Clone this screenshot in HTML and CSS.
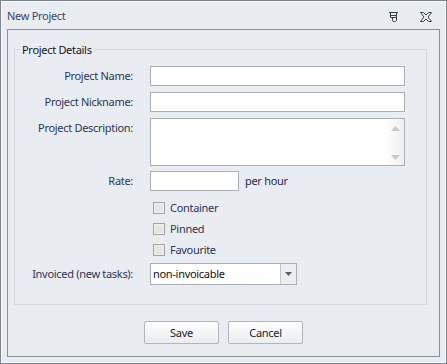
FILE: index.html
```html
<!DOCTYPE html>
<html>
<head>
<meta charset="utf-8">
<title>New Project</title>
<link rel="stylesheet" href="styles.css">
</head>
<body>
<div class="window">
  <div class="titlebar">
    <span class="title">New Project</span>
    <span class="tb-icons">
      <svg class="pin" width="9" height="10" viewBox="0 0 9 10" fill="none" stroke="#3a3f47" stroke-width="1">
        <path d="M0 0.5H9"/>
        <path d="M1.5 0.5V5.5H7.5V0.5"/>
        <path d="M1.5 3.5H7.5"/>
        <path d="M3.5 5.5V8.5Q3.5 9.5 4.5 9.5H6.5L7.5 8.5V5.5"/>
      </svg>
      <svg class="close" width="12" height="10" viewBox="0 0 12 10" fill="none" stroke="#3a3f47" stroke-width="1">
        <path d="M0.5 0.5H3.5L6 3L8.5 0.5H11.5L8 5L11.5 9.5H8.5L6 7L3.5 9.5H0.5L4 5Z"/>
      </svg>
    </span>
  </div>
  <div class="frame">
    <div class="group">
      <span class="legend">Project Details</span>
      <div class="row">
        <span class="lbl">Project Name:</span>
        <div class="field wide"></div>
      </div>
      <div class="row">
        <span class="lbl">Project Nickname:</span>
        <div class="field wide"></div>
      </div>
      <div class="row">
        <span class="lbl">Project Description:</span>
        <div class="field wide desc">
          <div class="vscroll">
            <svg width="9" height="5" viewBox="0 0 9 5"><path d="M0 5L4.5 0L9 5Z" fill="#c9c9c9"/></svg>
            <svg width="9" height="5" viewBox="0 0 9 5"><path d="M0 0L4.5 5L9 0Z" fill="#c9c9c9"/></svg>
          </div>
        </div>
      </div>
      <div class="row row-rate">
        <span class="lbl">Rate:</span>
        <div class="field rate"></div>
        <span class="unit">per hour</span>
      </div>
      <div class="checks">
        <div class="check"><span class="box"></span><span class="ctext">Container</span></div>
        <div class="check"><span class="box"></span><span class="ctext">Pinned</span></div>
        <div class="check"><span class="box"></span><span class="ctext">Favourite</span></div>
      </div>
      <div class="row row-combo">
        <span class="lbl">Invoiced (new tasks):</span>
        <div class="combo">
          <span class="combo-text">non-invoicable</span>
          <span class="combo-btn">
            <svg width="7" height="4" viewBox="0 0 7 4"><path d="M0 0H7L3.5 4Z" fill="#5a5f66"/></svg>
          </span>
        </div>
      </div>
    </div>
    <div class="buttons">
      <button class="btn">Save</button>
      <button class="btn">Cancel</button>
    </div>
  </div>
</div>
</body>
</html>
```
FILE: styles.css
```css
html, body {
  margin: 0;
  padding: 0;
}
body {
  font-family: "Noto Sans", "Open Sans", sans-serif;
  font-size: 11px;
  letter-spacing: -0.3px;
  color: #2d3656;
  background: #e9ecf0;
}
.window {
  width: 447px;
  height: 364px;
  box-sizing: border-box;
  border: 1px solid #7b848f;
  box-shadow: inset 0 0 0 1px #f7f8fa;
  background: #e9ecf0;
  display: flex;
  flex-direction: column;
}
.titlebar {
  height: 28px;
  flex: none;
  display: flex;
  align-items: center;
  justify-content: space-between;
  padding: 0 14px 0 6px;
}
.title {
  color: #3b4466;
  font-size: 11px;
  line-height: 14px;
  margin-top: 1px;
}
.tb-icons {
  display: flex;
  align-items: flex-start;
  gap: 22px;
  margin-top: 4px;
}
.pin, .close {
  display: block;
}
.frame {
  flex: 1;
  margin: 0 6px 6px;
  border: 1px solid #8c9199;
  padding: 19px 12px 0 6px;
  display: flex;
  flex-direction: column;
}
.group {
  position: relative;
  border: 1px solid #d4d8dd;
  padding: 16px 0 19px 0;
}
.legend {
  position: absolute;
  top: -8px;
  left: 5px;
  padding: 0 2px;
  background: #e9ecf0;
  color: #14161c;
  font-size: 11px;
  line-height: 16px;
}
.row {
  display: flex;
  align-items: flex-start;
  margin-top: 6px;
}
.row:first-of-type {
  margin-top: 0;
}
.lbl {
  width: 118px;
  margin-right: 17px;
  text-align: right;
  line-height: 20px;
  white-space: nowrap;
  color: #2d3656;
}
.field {
  height: 20px;
  box-sizing: border-box;
  border: 1px solid #a9afb8;
  background: #fff;
}
.wide {
  width: 255px;
}
.desc {
  height: 48px;
  display: flex;
  justify-content: flex-end;
}
.vscroll {
  width: 18px;
  height: 100%;
  box-sizing: border-box;
  background: linear-gradient(to right, #ffffff, #eeeeee);
  display: flex;
  flex-direction: column;
  justify-content: space-between;
  align-items: center;
  padding: 7px 0 5px;
}
.vscroll svg {
  display: block;
}
.row-rate {
  margin-top: 5px;
}
.rate {
  width: 89px;
}
.unit {
  margin-left: 6px;
  line-height: 20px;
  color: #1f2a58;
}
.checks {
  padding-left: 138px;
  display: flex;
  flex-direction: column;
}
.check {
  display: flex;
  align-items: center;
  height: 12px;
  margin-top: 9px;
}
.check:first-child {
  margin-top: 11px;
}
.box {
  width: 12px;
  height: 12px;
  box-sizing: border-box;
  border: 1px solid #a4a4a4;
  background: #e6e6e6;
  box-shadow: inset 0 0 0 1px #f0f0f0;
  flex: none;
}
.ctext {
  margin-left: 5px;
  line-height: 14px;
  color: #2d3656;
}
.row-combo {
  margin-top: 7px;
}
.row-combo .lbl {
  line-height: 22px;
}
.combo {
  width: 147px;
  height: 22px;
  box-sizing: border-box;
  border: 1px solid #a9afb8;
  background: #fff;
  display: flex;
}
.combo-text {
  flex: 1;
  padding-left: 2px;
  line-height: 20px;
  color: #111;
}
.combo-btn {
  width: 15px;
  border-left: 1px solid #c5c9cf;
  background: #eceef1;
  display: flex;
  align-items: center;
  justify-content: center;
}
.combo-btn svg {
  display: block;
}
.buttons {
  display: flex;
  justify-content: center;
  gap: 9px;
  margin: 16px -6px 0 0;
}
.btn {
  width: 75px;
  height: 23px;
  padding: 0;
  box-sizing: border-box;
  border: 1px solid #b1b6bd;
  border-radius: 2px;
  background: linear-gradient(#fdfdfe, #eaedf0);
  font-family: inherit;
  font-size: 11px;
  letter-spacing: -0.3px;
  color: #20242c;
  cursor: default;
}
```
